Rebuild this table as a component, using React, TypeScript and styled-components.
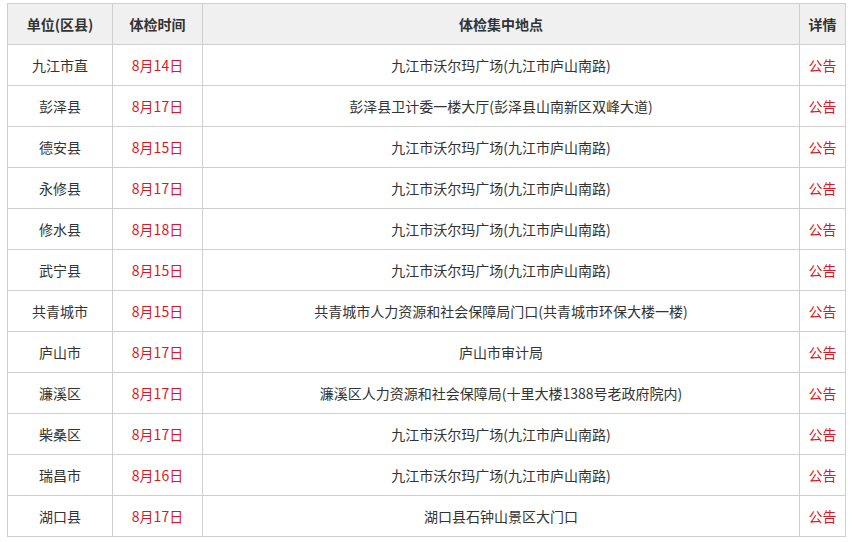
import React from "react";
import styled, { createGlobalStyle } from "styled-components";

const GlobalStyle = createGlobalStyle`
  body {
    margin: 0;
    background: #fff;
    font-family: "Noto Sans CJK SC", "Noto Sans", sans-serif;
  }
`;

type Row = {
  unit: string;
  date: string;
  place: string;
};

const rows: Row[] = [
  { unit: "九江市直", date: "8月14日", place: "九江市沃尔玛广场(九江市庐山南路)" },
  { unit: "彭泽县", date: "8月17日", place: "彭泽县卫计委一楼大厅(彭泽县山南新区双峰大道)" },
  { unit: "德安县", date: "8月15日", place: "九江市沃尔玛广场(九江市庐山南路)" },
  { unit: "永修县", date: "8月17日", place: "九江市沃尔玛广场(九江市庐山南路)" },
  { unit: "修水县", date: "8月18日", place: "九江市沃尔玛广场(九江市庐山南路)" },
  { unit: "武宁县", date: "8月15日", place: "九江市沃尔玛广场(九江市庐山南路)" },
  { unit: "共青城市", date: "8月15日", place: "共青城市人力资源和社会保障局门口(共青城市环保大楼一楼)" },
  { unit: "庐山市", date: "8月17日", place: "庐山市审计局" },
  { unit: "濂溪区", date: "8月17日", place: "濂溪区人力资源和社会保障局(十里大楼1388号老政府院内)" },
  { unit: "柴桑区", date: "8月17日", place: "九江市沃尔玛广场(九江市庐山南路)" },
  { unit: "瑞昌市", date: "8月16日", place: "九江市沃尔玛广场(九江市庐山南路)" },
  { unit: "湖口县", date: "8月17日", place: "湖口县石钟山景区大门口" },
];

const Wrap = styled.div`
  padding: 3px 0 0 7px;
`;

const Table = styled.table`
  border-collapse: collapse;
  table-layout: fixed;
  width: 839px;
  font-size: 14px;
  color: #333;
`;

const Col = styled.col<{ $w: number }>`
  width: ${(p) => p.$w}px;
`;

const Th = styled.th`
  height: 40px;
  padding: 0;
  background: #f0f0f0;
  border: 1px solid #cfcfcf;
  font-weight: bold;
  text-align: center;
  vertical-align: middle;
`;

const Td = styled.td<{ $red?: boolean }>`
  height: 40px;
  padding: 0;
  border: 1px solid #cfcfcf;
  text-align: center;
  vertical-align: middle;
  color: ${(p) => (p.$red ? "#e0151f" : "#333")};
`;

export default function App() {
  return (
    <>
      <GlobalStyle />
      <Wrap>
        <Table>
          <colgroup>
            <Col $w={105} />
            <Col $w={90} />
            <Col $w={597} />
            <Col $w={46} />
          </colgroup>
          <thead>
            <tr>
              <Th>单位(区县)</Th>
              <Th>体检时间</Th>
              <Th>体检集中地点</Th>
              <Th>详情</Th>
            </tr>
          </thead>
          <tbody>
            {rows.map((r) => (
              <tr key={r.unit}>
                <Td>{r.unit}</Td>
                <Td $red>{r.date}</Td>
                <Td>{r.place}</Td>
                <Td $red>公告</Td>
              </tr>
            ))}
          </tbody>
        </Table>
      </Wrap>
    </>
  );
}
